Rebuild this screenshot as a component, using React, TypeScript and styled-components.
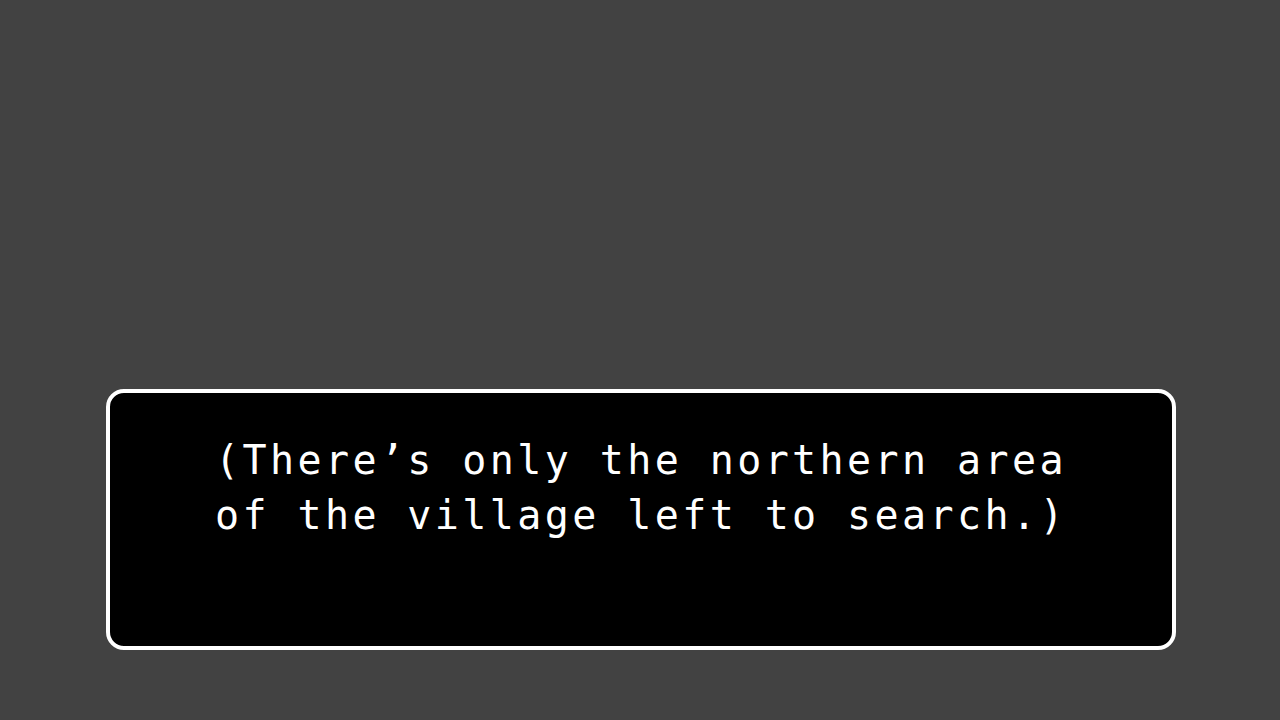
import React from "react";
import styled, { createGlobalStyle } from "styled-components";

const Global = createGlobalStyle`
  html, body { margin: 0; padding: 0; background: #424242; }
  body { width: 1280px; height: 720px; overflow: hidden; }
`;

const Screen = styled.div`
  width: 1280px;
  height: 720px;
  background: #424242;
  display: flex;
  flex-direction: column;
  justify-content: flex-end;
  align-items: flex-start;
  padding: 0 0 70px 106px;
  box-sizing: border-box;
`;

const DialogBox = styled.div`
  width: 1070px;
  height: 261px;
  box-sizing: border-box;
  background: #000;
  border: 4px solid #fff;
  border-radius: 18px;
  padding: 40px 0 0 105px;
`;

const Line = styled.div`
  font-family: "DejaVu Sans Mono", "Liberation Mono", monospace;
  font-size: 40px;
  line-height: 55px;
  letter-spacing: 3.4px;
  color: #fff;
  white-space: pre;
`;

export default function App() {
  return (
    <>
      <Global />
      <Screen>
        <DialogBox>
          <Line>(There’s only the northern area</Line>
          <Line>of the village left to search.)</Line>
        </DialogBox>
      </Screen>
    </>
  );
}
